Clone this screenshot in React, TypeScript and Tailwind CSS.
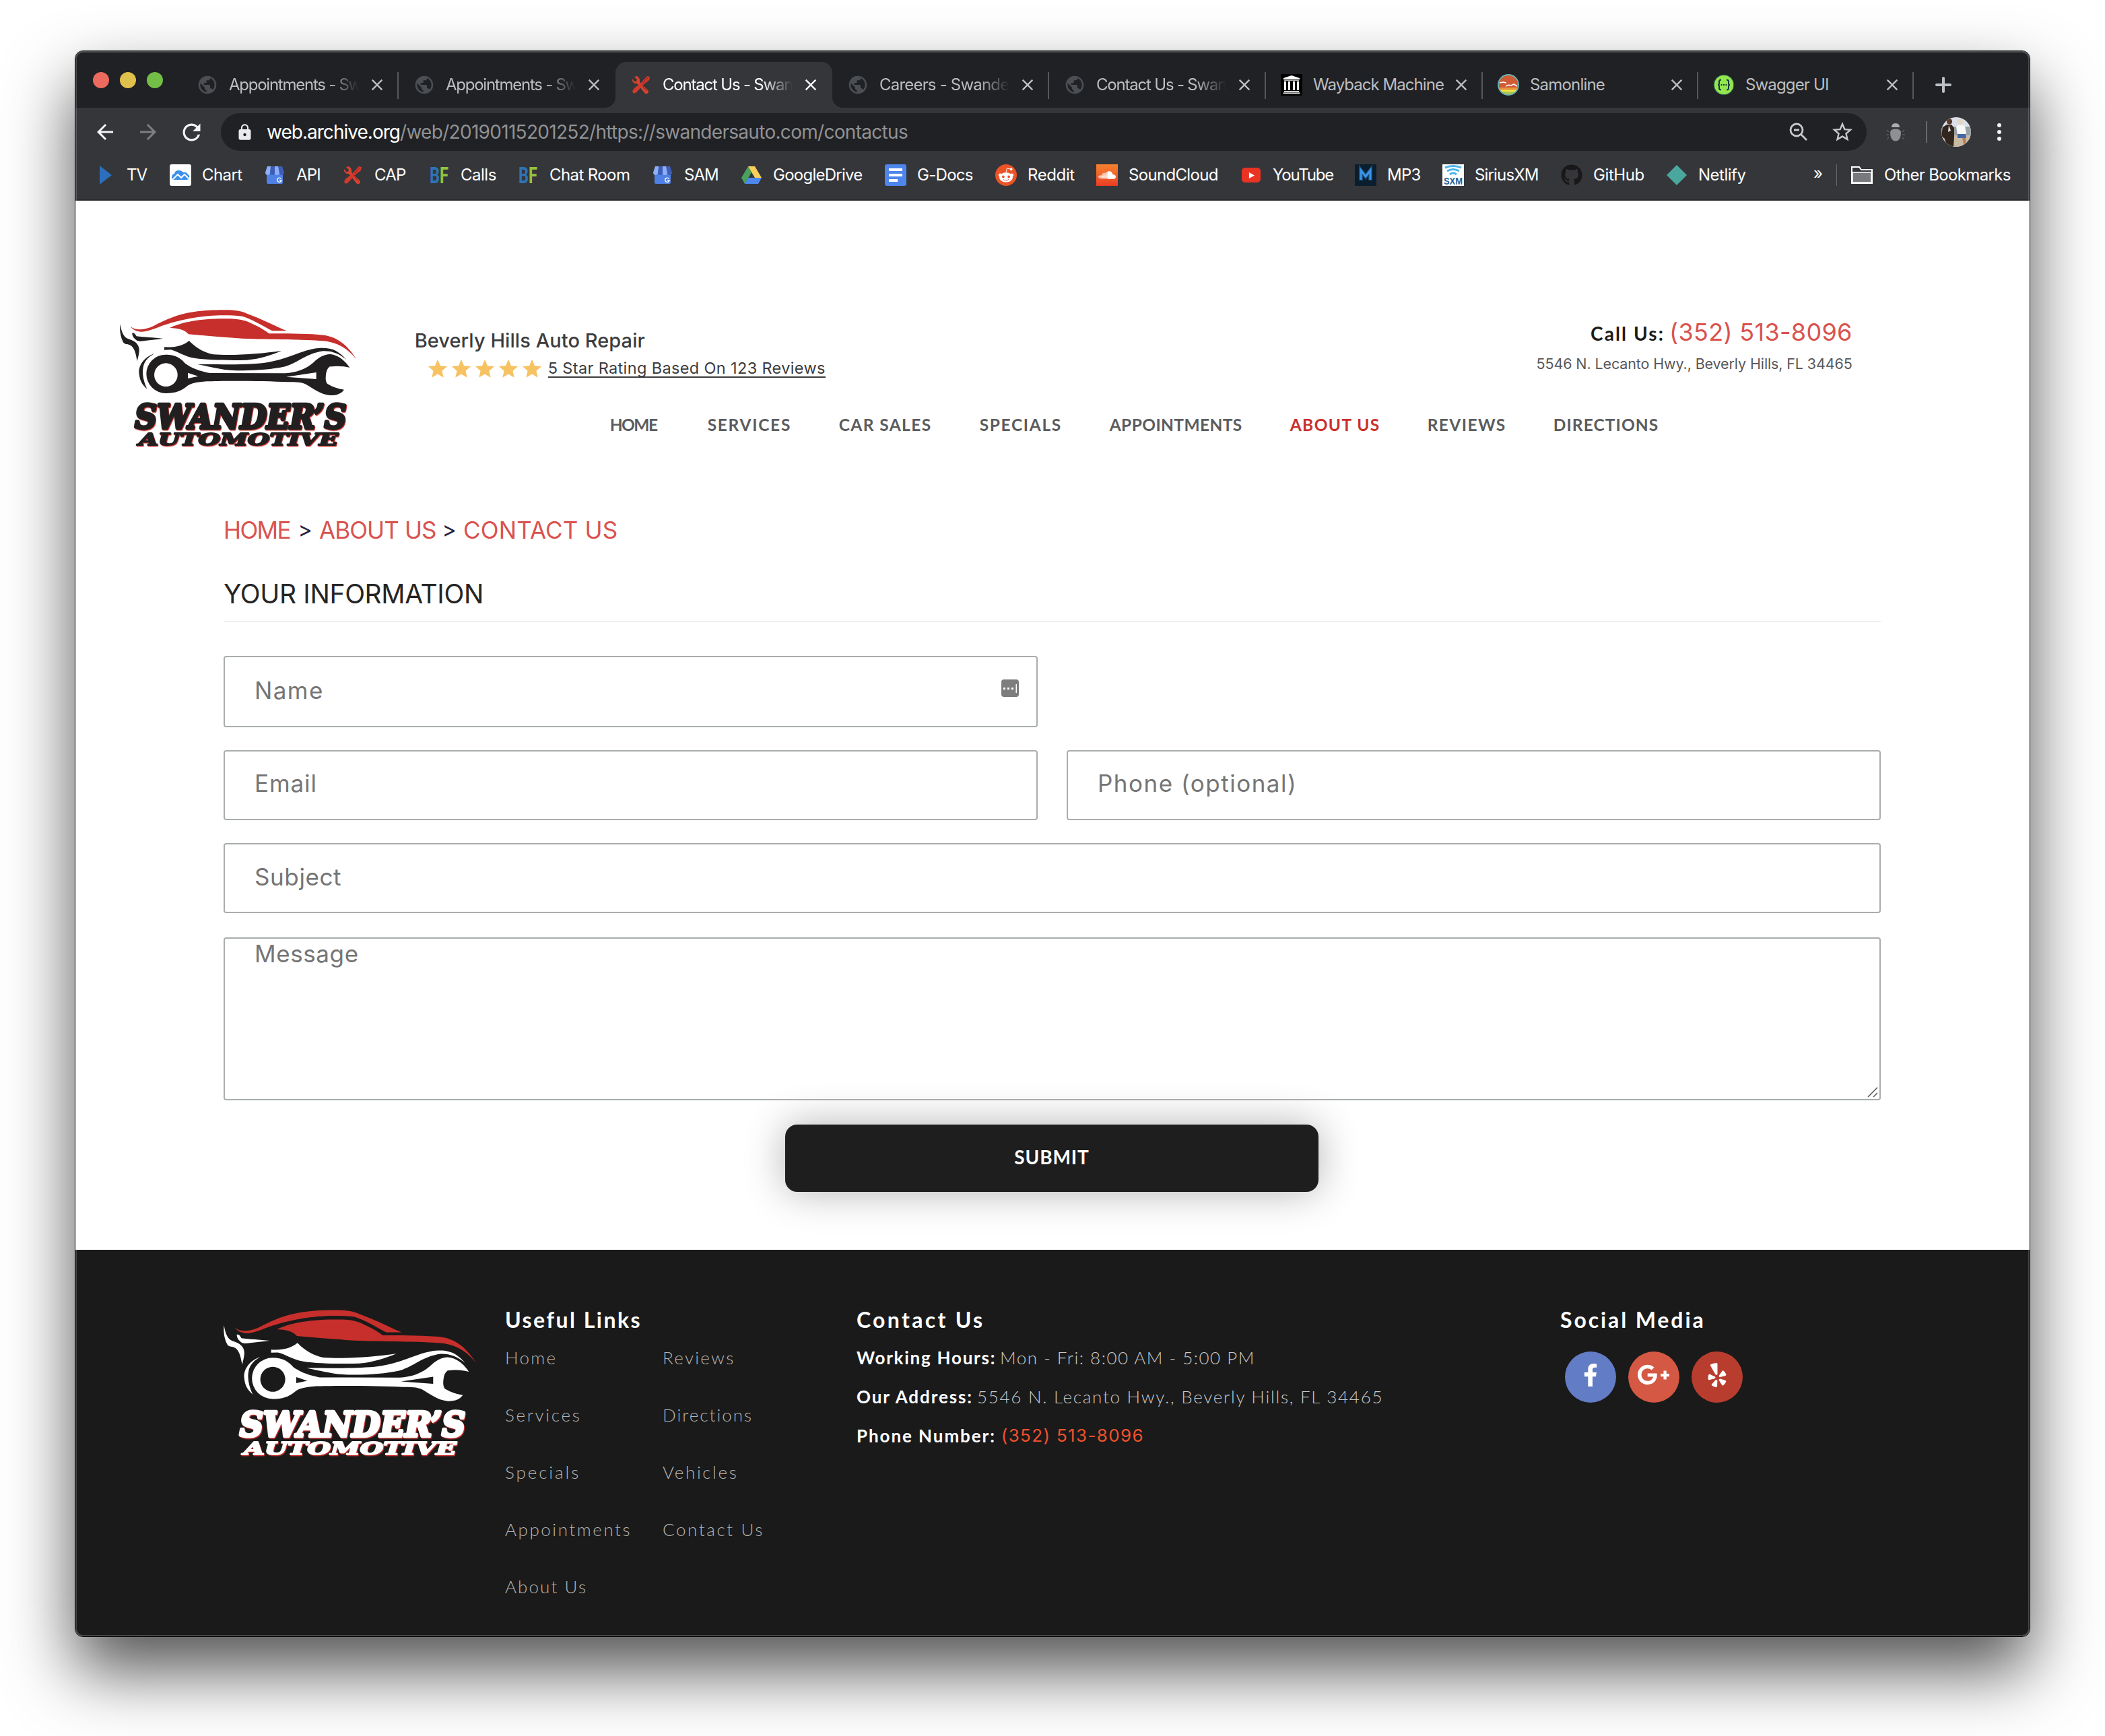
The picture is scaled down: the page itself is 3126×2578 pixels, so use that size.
import type { ReactNode } from "react";
import { MdArrowBack, MdArrowForward, MdClose, MdLock, MdPublic, MdRefresh, MdStar, MdStarBorder } from "react-icons/md";
import { FaFacebookF, FaGithub, FaGooglePlusG, FaRedditAlien, FaSoundcloud, FaYelp } from "react-icons/fa";

function Tools() {
  return (
    <svg viewBox="0 0 28 28" className="size-7">
      <path d="M4 2 8 6 7 9 4 9 1 5Q0 10 5 12L8 12 20 27Q25 28 25 23L12 10Q13 4 8 1Z" fill="#d9432f" />
      <path d="M23 1 27 2 26 7 17 14 9 23Q5 28 2 26Q0 23 4 19L13 12Z" fill="#d23a2c" />
      <path d="M24 3 16 12M15 14 22 23" stroke="#8e2a20" strokeWidth="1.500" strokeDasharray="2 1" />
    </svg>
  );
}

function Store() {
  return (
    <svg viewBox="0 0 28 28" className="size-7">
      <rect x="2" y="8" width="24" height="19" rx="2" fill="#4f80e4" />
      <path d="M3 1H9L7 11Q6 14 3 14 0 13 0 10Z" fill="#8db0f5" />
      <path d="M8 1H14V11Q13 14 10.500 14 7 14 7 11Z" fill="#3f5cb8" />
      <path d="M14 1H20L21 11Q21 14 17.500 14 14 14 14 11Z" fill="#8db0f5" />
      <path d="M19 1H25L28 10Q28 13 25 14 21 14 21 11Z" fill="#3f5cb8" />
      <path d="M23.500 19.500A3.200 3.200 0 1 0 24 22H21" fill="none" stroke="#fff" strokeWidth="1.400" />
    </svg>
  );
}

function Play() {
  return (
    <svg viewBox="0 0 32 32" className="size-8">
      <path d="M8 2 26 16 8 30Z" fill="#2d6fbe" />
    </svg>
  );
}

function Chart() {
  return (
    <svg viewBox="0 0 32 32" className="size-8">
      <rect width="32" height="32" rx="3" fill="#fff" />
      <path d="M8 23Q3 23 3 19 3 15 7 14 8 9 13 9 18 9 20 12 25 11 27 15 30 16 29 20 28 23 25 23Z" fill="#3c90ea" />
      <path d="M5 22 12 15 17 20 22 15 28 21" fill="none" stroke="#fff" strokeWidth="2" />
    </svg>
  );
}

function BF() {
  return (
    <svg viewBox="0 0 32 32" className="size-8">
      <text x="2" y="28" fontFamily="Roboto" fontSize="34" fontWeight="700" textLength="28" lengthAdjust="spacingAndGlyphs">
        <tspan fill="#2f73b6">B</tspan>
        <tspan fill="#93c23e">F</tspan>
      </text>
    </svg>
  );
}

function Drive() {
  return (
    <svg viewBox="0 0 32 32" className="size-8">
      <path d="M11 3 1 20 6 29 16 12Z" fill="#4aa15c" />
      <path d="M11 3H21L31 20H21Z" fill="#f9cf5b" />
      <path d="M11 20H31L26 29H6Z" fill="#4d88ee" />
    </svg>
  );
}

function Docs() {
  return (
    <svg viewBox="0 0 32 32" className="size-8">
      <rect width="32" height="32" rx="3" fill="#4e86ec" />
      <path d="M6 6H26V10H6ZM6 14H26V18H6ZM6 22H19V26H6Z" fill="#fff" />
    </svg>
  );
}

function Mp3() {
  return (
    <svg viewBox="0 0 32 32" className="size-8">
      <rect width="32" height="32" fill="#0b1e2e" />
      <path d="M9 24V9L16 18 23 9V24" fill="none" stroke="#17466f" strokeWidth="6" />
      <path d="M9 23V9L16 18 23 9V23" fill="none" stroke="#3a93e6" strokeWidth="3.200" />
    </svg>
  );
}

function Sxm() {
  return (
    <svg viewBox="0 0 32 32" className="size-8">
      <rect width="32" height="32" fill="#fff" />
      <path d="M4 5Q16 0 28 5M7 10Q16 5 25 10M11 15Q16 11 21 15" fill="none" stroke="#4bb4e8" strokeWidth="3" />
      <text x="2" y="30" fontFamily="Liberation Sans" fontWeight="700" fontSize="14" textLength="28" lengthAdjust="spacingAndGlyphs" fill="#1c5f95">
        SXM
      </text>
    </svg>
  );
}

function Netlify() {
  return (
    <svg viewBox="0 0 32 32" className="size-8">
      <path d="M16 1 31 16 16 31 1 16Z" fill="#4aa79e" />
    </svg>
  );
}

function SamIcon() {
  return (
    <svg viewBox="0 0 32 32" className="size-8">
      <clipPath id="samClip">
        <circle cx="16" cy="16" r="14.500" />
      </clipPath>
      <g clipPath="url(#samClip)">
        <rect width="32" height="21" fill="#cf5c36" />
        <rect y="20" width="32" height="4" fill="#e8953a" />
        <rect y="23.500" width="32" height="3" fill="#f2e44a" />
        <rect y="26" width="32" height="6" fill="#a9c84c" />
        <path d="M3 13 8 12 13 13M12 18 17 16 20 17 24 15 29 18" fill="none" stroke="#fff" strokeWidth="1.600" />
      </g>
      <circle cx="16" cy="16" r="15" fill="none" stroke="#6fb3b5" strokeWidth="1.800" />
    </svg>
  );
}

function SwaggerIcon() {
  return (
    <svg viewBox="0 0 32 32" className="size-8">
      <circle cx="16" cy="16" r="14.800" fill="#93e64b" stroke="#1f5a52" />
      <path
        d="M12 8.500Q9 8.500 9 11V14Q9 16 7 16 9 16 9 18V21Q9 23.500 12 23.500M20 8.500Q23 8.500 23 11V14Q23 16 25 16 23 16 23 18V21Q23 23.500 20 23.500"
        fill="none"
        stroke="#173647"
        strokeWidth="2"
      />
      <path d="M11.500 15h2v2h-2zM15 15h2v2h-2zM18.500 15h2v2h-2z" fill="#173647" />
    </svg>
  );
}

function Wayback() {
  return (
    <svg viewBox="0 0 32 32" className="size-8">
      <rect width="32" height="32" fill="#000" />
      <path d="M4 6 16 2 28 6V8H4ZM5 25H27V26.500H5ZM3.500 27.500H28.500V29H3.500Z" fill="#fff" />
      <path d="M5 9.500H27" stroke="#aaa" strokeWidth="1.500" />
      <path d="M6.500 11V24M12.500 11V24M19.500 11V24M25.500 11V24" stroke="#fff" strokeWidth="3" />
    </svg>
  );
}

function Globe() {
  return <MdPublic className="size-[34px] text-[#4b4e52]" />;
}

interface Tab {
  icon: ReactNode;
  title: string;
  track: string;
  active?: boolean;
  fade?: boolean;
  narrow?: boolean;
  line?: boolean;
}

const tabs: Tab[] = [
  { icon: <Globe />, title: "Appointments - Sw", track: "tracking-[-1.25px]", fade: true, line: true },
  { icon: <Globe />, title: "Appointments - Sw", track: "tracking-[-1.25px]", fade: true },
  { icon: <Tools />, title: "Contact Us - Swan", track: "tracking-[-1.2px]", fade: true, active: true },
  { icon: <Globe />, title: "Careers - Swande", track: "tracking-[-0.8px]", fade: true, line: true },
  { icon: <Globe />, title: "Contact Us - Swan", track: "tracking-[-1.2px]", fade: true, line: true },
  { icon: <Wayback />, title: "Wayback Machine", track: "tracking-[-0.95px]", line: true },
  { icon: <SamIcon />, title: "Samonline", track: "tracking-[-0.8px]", narrow: true, line: true },
  { icon: <SwaggerIcon />, title: "Swagger UI", track: "tracking-[-0.85px]", narrow: true, line: true },
];

const bookmarks: { icon: ReactNode; label: string; track: string }[] = [
  { icon: <Play />, label: "TV", track: "tracking-[-1px]" },
  { icon: <Chart />, label: "Chart", track: "tracking-[-0.6px]" },
  { icon: <Store />, label: "API", track: "tracking-[-0.8px]" },
  { icon: <Tools />, label: "CAP", track: "tracking-[-0.8px]" },
  { icon: <BF />, label: "Calls", track: "tracking-[-0.5px]" },
  { icon: <BF />, label: "Chat Room", track: "tracking-[-0.6px]" },
  { icon: <Store />, label: "SAM", track: "tracking-[-1px]" },
  { icon: <Drive />, label: "GoogleDrive", track: "tracking-[-0.74px]" },
  { icon: <Docs />, label: "G-Docs", track: "tracking-[-0.7px]" },
  {
    icon: (
      <span className="flex size-8 items-center justify-center rounded-full bg-[#ec5428]">
        <FaRedditAlien className="size-6 text-white" />
      </span>
    ),
    label: "Reddit",
    track: "tracking-[-0.4px]",
  },
  {
    icon: (
      <span className="flex size-8 items-center justify-center bg-linear-to-b from-[#f5822f] to-[#ea3b24]">
        <FaSoundcloud className="size-[26px] text-white" />
      </span>
    ),
    label: "SoundCloud",
    track: "tracking-[-0.68px]",
  },
  {
    icon: (
      <span className="flex h-[22px] w-7 items-center justify-center rounded-[5px] bg-[#ea3323]">
        <svg viewBox="0 0 10 10" className="size-[9px]">
          <path d="M1 0 10 5 1 10Z" fill="#fff" />
        </svg>
      </span>
    ),
    label: "YouTube",
    track: "tracking-[-1.2px]",
  },
  { icon: <Mp3 />, label: "MP3", track: "tracking-[-0.8px]" },
  { icon: <Sxm />, label: "SiriusXM", track: "tracking-[-0.85px]" },
  { icon: <FaGithub className="size-8 text-[#1a1718]" />, label: "GitHub", track: "tracking-[-0.4px]" },
  { icon: <Netlify />, label: "Netlify", track: "tracking-[-0.5px]" },
];

function Logo({ ink, className }: { ink: string; className: string }) {
  return (
    <svg viewBox="45 80 1070 625" className={className} fill={ink}>
      <g fill="#c62f2b">
        <path d="M100 163C125 182 160 180 200 163C300 110 370 90 520 90C570 90 595 95 620 106C690 132 745 160 797 183L733 183C690 160 640 130 600 118C560 113 520 113 500 114C400 117 330 135 280 148C220 165 190 185 150 187C130 186 112 178 100 163Z" />
        <path d="M275 170C330 145 400 130 515 129C580 128 610 134 640 150C670 163 700 180 718 195C800 195 860 195 940 200C1010 203 1060 235 1108 310C1070 265 1030 235 960 228C880 220 720 222 600 217C520 212 440 205 360 198C345 182 325 172 275 170Z" />
      </g>
      <path d="M55 153C62 190 70 215 100 222C130 232 142 250 140 275C138 292 134 305 131 318C126 290 120 255 98 246C85 240 75 245 68 232C55 205 53 180 55 153Z" />
      <path d="M109 192C118 190 124 200 128 207C160 212 205 212 246 218L165 227C150 229 135 231 128 225C115 215 108 205 109 192Z" />
      <path d="M252 255C300 258 335 250 362 227C395 260 430 280 470 288C560 295 680 285 775 272C730 290 680 308 620 313C540 315 440 313 390 305C340 298 310 272 280 267L252 268Z" />
      <path d="M400 332C500 332 620 335 700 325C800 310 850 275 920 262C1000 250 1030 275 1062 310C1030 285 1000 272 960 273C880 285 850 325 790 342C700 362 560 365 500 352C460 345 430 338 400 332Z" />
      <path d="M207 285C150 305 135 350 140 375C142 405 155 425 175 442C160 410 152 375 158 345C162 320 180 300 207 285Z" />
      <path
        fillRule="evenodd"
        d="M258 289C300 289 325 305 345 328C375 350 410 362 455 371L790 372C840 368 880 355 915 325C940 300 965 288 990 287C1030 290 1060 320 1078 347C1050 340 1030 338 990 342C975 352 972 370 971 395C972 410 975 415 980 420C1005 435 1030 442 1053 445C1040 463 1020 471 990 470C950 468 915 440 880 420C860 411 840 412 800 411C700 405 500 405 440 408C400 412 370 415 350 432C325 452 300 461 258 461A86 86 0 0 1 258 289ZM259 327A52 52 0 1 0 259.100 327ZM357 370L403 385L357 395ZM929 368L795 388L929 398Z"
      />
      <g
        className="[filter:drop-shadow(3px_4px_0_#c62f2b)]"
        fontFamily="'DejaVu Serif', serif"
        fontWeight="700"
        fontStyle="italic"
        stroke={ink}
        strokeLinejoin="round"
      >
        <text x="121" y="617" fontSize="144" strokeWidth="13" textLength="942" lengthAdjust="spacingAndGlyphs">
          SWANDER’S
        </text>
        <text x="138" y="693" fontSize="75" strokeWidth="6" textLength="888" lengthAdjust="spacingAndGlyphs">
          AUTOMOTIVE
        </text>
      </g>
    </svg>
  );
}

function TabStrip() {
  return (
    <div className="flex h-[84px] bg-[#202124]">
      <div className="flex w-[158px] gap-4 pt-[31px] pl-[26px]">
        <span className="size-6 rounded-full bg-[#ed6a5e]" />
        <span className="size-6 rounded-full bg-[#e0c04c]" />
        <span className="size-6 rounded-full bg-[#72be47]" />
      </div>
      {tabs.map((t, i) => (
        <div
          key={i}
          className={`relative mt-4 flex h-[68px] items-center pl-[22px] ${t.narrow ? "w-[320px]" : "w-[322px]"} ${
            t.active ? "rounded-t-2xl bg-[#35363a] text-white" : "text-[#bcbec1]"
          }`}
        >
          {t.active && (
            <>
              <span className="absolute bottom-0 -left-4 size-4 bg-[radial-gradient(circle_at_0_0,transparent_16px,#35363a_16px)]" />
              <span className="absolute -right-4 bottom-0 size-4 bg-[radial-gradient(circle_at_100%_0,transparent_16px,#35363a_16px)]" />
            </>
          )}
          <span className="flex w-8 justify-center">{t.icon}</span>
          <span
            className={`ml-4 whitespace-nowrap ${t.track} ${t.narrow ? "w-[195px]" : "w-[197px]"} ${
              t.fade ? "[mask-image:linear-gradient(to_right,black_75%,transparent_98%)]" : ""
            }`}
          >
            {t.title}
          </span>
          <MdClose className="ml-[9px] size-7" />
          {t.line && <span className="absolute top-[15px] right-0 h-10 w-[2px] bg-[#55585c]" />}
        </div>
      ))}
      <svg viewBox="0 0 24 24" className="mt-[38px] ml-8 size-6 stroke-[#bcc0c4]" strokeWidth="4" strokeLinecap="round">
        <path d="M12 2V22M2 12H22" />
      </svg>
    </div>
  );
}

function Toolbar() {
  return (
    <div className="flex h-[72px] items-center bg-[#35363a] pl-[26px]">
      <MdArrowBack className="size-9 text-[#f1f3f4]" />
      <MdArrowForward className="ml-7 size-9 text-[#7d7f82]" />
      <MdRefresh className="ml-[27px] size-[39px] text-[#f1f3f4]" />
      <div className="ml-6 flex h-14 w-[2444px] items-center rounded-full bg-[#202124] pl-[22px] text-[28px]">
        <MdLock className="size-[27px] text-[#e8eaed]" />
        <span className="ml-[19px] tracking-[-0.98px] text-white">web.archive.org</span>
        <span className="tracking-[-0.7px] text-[#909295]">/web/20190115201252/https://swandersauto.com/contactus</span>
        <svg viewBox="0 0 28 28" className="ml-auto size-7 fill-none stroke-[#c6c8ca]" strokeWidth="2.800">
          <circle cx="11" cy="11" r="9" />
          <path d="M17.500 17.500 26 26M7 11H15" />
        </svg>
        <MdStarBorder className="mr-[18px] ml-[33px] size-9 text-[#c6c8ca]" />
      </div>
      <svg viewBox="0 0 28 28" className="ml-[29px] size-7">
        <path d="M8 7Q8 1 14 1 20 1 20 7Z" fill="#a9abad" />
        <path d="M6 15Q6 9.500 14 9.500 22 9.500 22 15 22 27 14 27.500 6 27 6 15Z" fill="#8e9092" />
        <path d="M4 14 1 11M4 18H0M4 22 1 25M24 14 27 11M24 18H28M24 22 27 25" stroke="#5a5b5f" strokeWidth="1.500" />
      </svg>
      <span className="ml-[31px] h-8 w-[2px] bg-[#66686c]" />
      <svg viewBox="0 0 44 44" className="ml-[21px] size-11">
        <clipPath id="avatarClip">
          <circle cx="22" cy="22" r="22" />
        </clipPath>
        <g clipPath="url(#avatarClip)">
          <rect width="44" height="44" fill="#d9e0ea" />
          <rect y="14" width="44" height="14" fill="#98a2a3" />
          <rect y="27" width="44" height="17" fill="#c9bba3" />
          <path d="M2 15 8 11 15 11 19 16 19 30 18 44H8L5 32 0 28Z" fill="#33261f" />
          <circle cx="12" cy="6.500" r="4" fill="#5a3a28" />
          <path d="M11 12 14 20 10 22Z" fill="#e4e4e4" />
          <path d="M22 14 27 11 35 13 37 25 24 26Z" fill="#f7f7f7" />
          <circle cx="28" cy="7" r="4.500" fill="#e2d6c4" />
          <path d="M24 25H36L37 31H24Z" fill="#4667a5" />
          <path d="M31 31H36L37 40H33Z" fill="#b97f5c" />
        </g>
      </svg>
      <span className="ml-[39px] flex flex-col gap-1">
        <i className="size-[6px] rounded-full bg-[#f1f3f4]" />
        <i className="size-[6px] rounded-full bg-[#f1f3f4]" />
        <i className="size-[6px] rounded-full bg-[#f1f3f4]" />
      </span>
    </div>
  );
}

function BookmarksBar() {
  return (
    <div className="flex h-[66px] items-center border-b-2 border-[#28292b] bg-[#35363a] pb-2 pl-[28px] whitespace-nowrap text-white">
      <div className="grid w-[2553px] grid-cols-[112px_140px_116px_128px_132px_200px_132px_214px_164px_150px_214px_170px_130px_176px_156px_1fr]">
        {bookmarks.map((b, i) => (
          <span key={i} className="flex items-center gap-4">
            <span className="flex w-8 justify-center">{b.icon}</span>
            <span className={b.track}>{b.label}</span>
          </span>
        ))}
      </div>
      <span className="-mt-1 leading-8">»</span>
      <span className="ml-[20px] h-8 w-[1px] bg-[#66686c]" />
      <svg viewBox="0 0 32 26" className="ml-[21px] h-[26px] w-8">
        <path d="M1 1H12L15 5H31V25H1Z" fill="none" stroke="#fff" strokeWidth="2" />
        <path d="M2 9H30V24H2Z" fill="#77797c" stroke="#fff" strokeWidth="1.500" />
      </svg>
      <span className="ml-[17px] tracking-[-0.65px]">Other Bookmarks</span>
    </div>
  );
}

const nav: { label: string; cell: string; active?: boolean }[] = [
  { label: "HOME", cell: "w-[145px] tracking-[-1.5px]" },
  { label: "SERVICES", cell: "w-[195px] tracking-[1.7px]" },
  { label: "CAR SALES", cell: "w-[209px] tracking-[1.4px]" },
  { label: "SPECIALS", cell: "w-[193px] tracking-[1.65px]" },
  { label: "APPOINTMENTS", cell: "w-[268px] tracking-[0.4px]" },
  { label: "ABOUT US", cell: "w-[204px] tracking-[1.4px]", active: true },
  { label: "REVIEWS", cell: "w-[187px] tracking-[1.4px]" },
  { label: "DIRECTIONS", cell: "w-[160px] tracking-[1.1px]" },
];

function Header() {
  return (
    <header className="flex h-[465px] pt-[159px] pl-[63px]">
      <Logo ink="#221f20" className="h-[208.300px] w-[356.700px] shrink-0" />
      <div className="ml-[84px] w-[2135px] whitespace-nowrap">
        <div className="flex justify-between font-['Inter',sans-serif] text-[#3c3c3e]">
          <div className="pt-[29px]">
            <div className="h-10 text-[29px] leading-10 font-medium tracking-[0.06px]">Beverly Hills Auto Repair</div>
            <div className="mt-1 flex h-[35px] items-center pl-[17px] text-[23.500px]">
              {[0, 1, 2, 3, 4].map((i) => (
                <MdStar key={i} className="mr-[1px] size-[34px] text-[#f6c262]" />
              ))}
              <span className="ml-[6px] border-b-2 border-[#3c3c3e] leading-[25px] tracking-[0.36px]">
                5 Star Rating Based On 123 Reviews
              </span>
            </div>
          </div>
          <div className="pt-[14px] text-right">
            <div className="flex h-11 items-center justify-end leading-11">
              <span className="mr-[7px] pt-1 font-['Lato',sans-serif] text-[28px] font-bold tracking-[2.100px] text-[#1b1b1b]">
                Call Us:
              </span>
              <span className="text-[36px] tracking-[0.3px] text-[#d9534f]">(352) 513-8096</span>
            </div>
            <div className="mt-[10px] h-[30px] text-[21.500px] leading-[30px] tracking-[-0.12px] text-[#58585b]">
              5546 N. Lecanto Hwy., Beverly Hills, FL 34465
            </div>
          </div>
        </div>
        <nav className="mt-[51px] ml-[290px] flex font-['Lato',sans-serif] text-[24.500px] leading-[30px] font-bold text-[#5b5c5e]">
          {nav.map((n) => (
            <a key={n.label} className={`${n.cell} ${n.active ? "text-[#c9302c]" : ""}`}>
              {n.label}
            </a>
          ))}
        </nav>
      </div>
    </header>
  );
}

const field =
  "block w-full rounded-[4px] border-2 border-[#a9adad] bg-white pr-10 pl-[44px] text-[35px] outline-none placeholder:text-[#757575] placeholder:opacity-100";

function Form() {
  return (
    <main className="flex h-[1093px] w-[2681px] flex-col pl-[220px] font-['Inter',sans-serif]">
      <div className="flex h-12 gap-[14px] text-[35px] leading-12 whitespace-nowrap text-[#d9534f]">
        <a className="w-[100px] tracking-[-1.600px]">HOME</a>
        <span className="flex w-[14px] justify-center text-[32px] text-[#23233a]">&gt;</span>
        <a className="w-[172px] tracking-[-0.900px]">ABOUT US</a>
        <span className="flex w-[14px] justify-center text-[32px] text-[#23233a]">&gt;</span>
        <a className="tracking-[0.150px]">CONTACT US</a>
      </div>
      <h1 className="mt-[43px] h-[70px] border-b-2 border-[#eee] text-[39px] leading-[56px] tracking-[-0.350px] text-[#252525]">
        YOUR INFORMATION
      </h1>
      <div className="mt-[50px] grid grid-cols-2 gap-x-[43px] gap-y-[34px]">
        <div className="relative h-[106px]">
          <input placeholder="Name" className={`${field} h-[106px] pb-1 tracking-[1.400px]`} />
          <svg viewBox="0 0 26 26" className="absolute top-[35px] right-[28px] size-[26px]">
            <rect width="26" height="26" rx="4" fill="#7d7d7d" />
            <path d="M3 12h3v3H3zM9 12h3v3H9zM15 12h3v3h-3zM21.500 7h1.500v13h-1.500z" fill="#fff" />
          </svg>
        </div>
        <span />
        <input placeholder="Email" className={`${field} h-[104px] pb-[6px] tracking-[0.900px]`} />
        <input placeholder="Phone (optional)" className={`${field} h-[104px] pb-[6px] tracking-[1.500px]`} />
        <input placeholder="Subject" className={`${field} col-span-2 h-[104px] pb-1 tracking-[0.600px]`} />
        <div className="relative col-span-2 mt-[2px] h-[242px] rounded-[4px] border-2 border-[#a9adad]">
          <textarea
            placeholder="Message"
            className="block size-full resize-none bg-transparent pl-[44px] text-[35px] leading-[44px] tracking-[0.600px] outline-none placeholder:text-[#757575] placeholder:opacity-100"
          />
          <svg viewBox="0 0 16 16" className="absolute right-[2px] bottom-[2px] size-4 stroke-[#555]">
            <path d="M1 15 15 1M9 15 15 9" strokeWidth="1.500" />
          </svg>
        </div>
      </div>
      <button className="mt-9 ml-[834px] h-[100px] w-[792px] rounded-[18px] bg-[#1e1e1e] pb-1 font-['Lato',sans-serif] text-[28px] font-bold tracking-[0.900px] text-white shadow-[0_0_60px_rgba(0,0,0,0.3)]">
        SUBMIT
      </button>
    </main>
  );
}

const links: [string, string][] = [
  ["Home", "tracking-[2.300px]"],
  ["Reviews", "tracking-[2.300px]"],
  ["Services", "tracking-[2.700px]"],
  ["Directions", "tracking-[2.000px]"],
  ["Specials", "tracking-[2.900px]"],
  ["Vehicles", "tracking-[2.600px]"],
  ["Appointments", "tracking-[2.550px]"],
  ["Contact Us", "tracking-[2.600px]"],
  ["About Us", "tracking-[2.100px]"],
];

function Footer() {
  return (
    <footer className="flex h-[574px] bg-[#1a1a1a] pl-[217px] font-['Lato',sans-serif] text-[26px] whitespace-nowrap text-white">
      <Logo ink="#ffffff" className="mt-[86px] h-[222.200px] w-[380.400px] shrink-0" />
      <section className="ml-[40.600px] w-[522px] pt-[89px]">
        <h2 className="h-[30px] text-[32px] leading-[30px] font-bold tracking-[2.500px]">Useful Links</h2>
        <div className="-mt-[1px] grid grid-cols-[234px_200px] leading-[85px] font-light text-[#b4b4b4]">
          {links.map(([label, track]) => (
            <a key={label} className={track}>
              {label}
            </a>
          ))}
        </div>
      </section>
      <section className="w-[1045px] pt-[89px] leading-[58px] font-light text-[#c8c8c8]">
        <h2 className="mb-[12px] text-[32px] leading-[30px] font-bold tracking-[3.300px] text-white">Contact Us</h2>
        <p className="flex gap-[6px]">
          <b className="font-bold tracking-[1.750px] text-white">Working Hours:</b>
          <span className="tracking-[1.500px]">Mon - Fri: 8:00 AM - 5:00 PM</span>
        </p>
        <p className="flex gap-[6px]">
          <b className="font-bold tracking-[1.900px] text-white">Our Address:</b>
          <span className="tracking-[1.730px]">5546 N. Lecanto Hwy., Beverly Hills, FL 34465</span>
        </p>
        <p className="flex gap-2">
          <b className="font-bold tracking-[1.930px] text-white">Phone Number:</b>
          <span className="font-['Inter',sans-serif] font-normal tracking-[1.350px] text-[#f0512d]">(352) 513-8096</span>
        </p>
      </section>
      <section className="pt-[89px]">
        <h2 className="text-[32px] leading-[30px] font-bold tracking-[2.900px]">Social Media</h2>
        <div className="mt-[32px] ml-[7px] flex gap-[18px]">
          <a className="flex size-[76px] items-center justify-center rounded-full bg-[#627cc5] pb-[7px]">
            <FaFacebookF className="size-[34px]" />
          </a>
          <a className="flex size-[76px] items-center justify-center rounded-full bg-[#d45843] pb-[7px]">
            <FaGooglePlusG className="size-[49px]" />
          </a>
          <a className="flex size-[76px] items-center justify-center rounded-full bg-[#b93d2e] pb-[7px]">
            <FaYelp className="size-[36px]" />
          </a>
        </div>
      </section>
    </footer>
  );
}

export default function App() {
  return (
    <div className="h-[2578px] w-[3126px] overflow-hidden bg-white pt-[75px] pl-[111px]">
      <div className="relative h-[2356px] w-[2904px] overflow-hidden rounded-[12px] border border-black bg-white shadow-[0_50px_100px_rgba(0,0,0,0.68)]">
        <div className="font-['Inter',sans-serif] text-[24px]">
          <TabStrip />
          <Toolbar />
          <BookmarksBar />
        </div>
        <Header />
        <Form />
        <Footer />
        <div className="pointer-events-none absolute inset-0 rounded-[11px] shadow-[inset_0_0_0_2px_rgba(255,255,255,0.2)]" />
      </div>
    </div>
  );
}
